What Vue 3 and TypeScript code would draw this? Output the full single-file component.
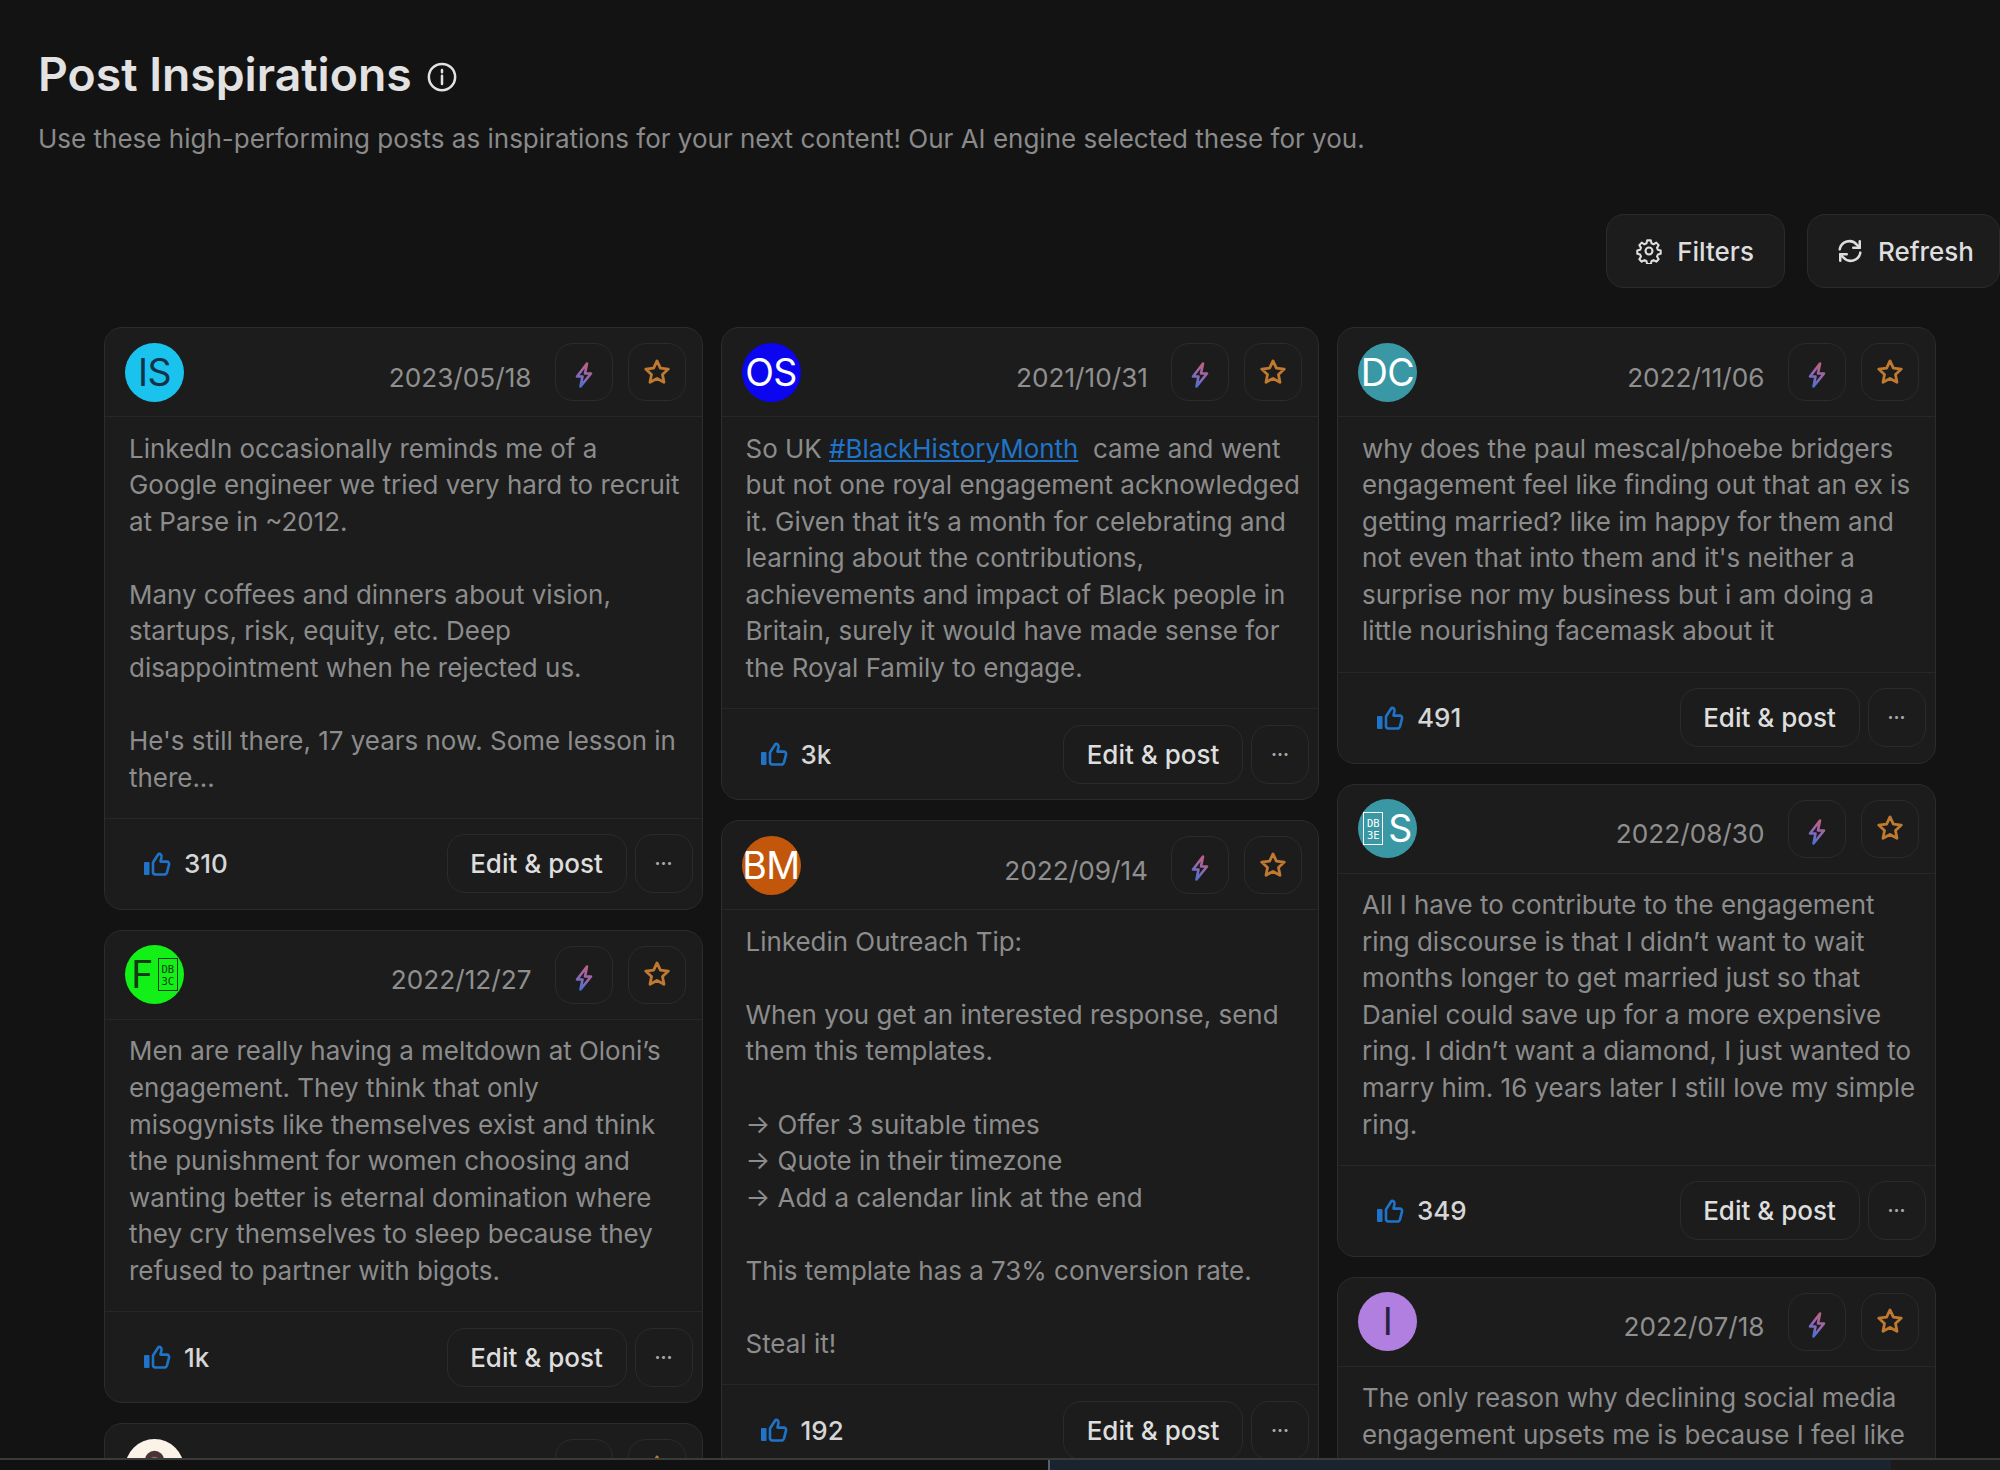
<script setup lang="ts">
interface Post {
  id: string
  initials: string
  avatar: string
  fg: string
  date: string
  body: string
  likes: string
  code?: string[]
  codeFirst?: boolean
  photo?: boolean
  tag?: string
  lead?: string
}

const col1: Post[] = [
  { id: 'a', initials: 'IS', avatar: '#19c3ee', fg: '#16324a', date: '2023/05/18', likes: '310',
    body: "LinkedIn occasionally reminds me of a Google engineer we tried very hard to recruit at Parse in ~2012.\n\nMany coffees and dinners about vision, startups, risk, equity, etc. Deep disappointment when he rejected us.\n\nHe's still there, 17 years now. Some lesson in there..." },
  { id: 'b', initials: 'F', avatar: '#12f018', fg: '#123a14', date: '2022/12/27', likes: '1k', code: ['DB', '3C'],
    body: 'Men are really having a meltdown at Oloni’s engagement. They think that only misogynists like themselves exist and think the punishment for women choosing and wanting better is eternal domination where they cry themselves to sleep because they refused to partner with bigots.' },
  { id: 'c', initials: '', avatar: '#fbf3e8', fg: '#000000', date: '', likes: '', photo: true, body: '' },
]
const col2: Post[] = [
  { id: 'd', initials: 'OS', avatar: '#0c06f0', fg: '#ffffff', date: '2021/10/31', likes: '3k', tag: '#BlackHistoryMonth',
    lead: 'So UK ',
    body: 'came and went but not one royal engagement acknowledged it. Given that it’s a month for celebrating and learning about the contributions, achievements and impact of Black people in Britain, surely it would have made sense for the Royal Family to engage.' },
  { id: 'e', initials: 'BM', avatar: '#c2570c', fg: '#ffffff', date: '2022/09/14', likes: '192',
    body: 'Linkedin Outreach Tip:\n\nWhen you get an interested response, send them this templates.\n\n→ Offer 3 suitable times\n→ Quote in their timezone\n→ Add a calendar link at the end\n\nThis template has a 73% conversion rate.\n\nSteal it!' },
]
const col3: Post[] = [
  { id: 'f', initials: 'DC', avatar: '#3a98a4', fg: '#ffffff', date: '2022/11/06', likes: '491',
    body: "why does the paul mescal/phoebe bridgers engagement feel like finding out that an ex is getting married? like im happy for them and not even that into them and it's neither a surprise nor my business but i am doing a little nourishing facemask about it" },
  { id: 'g', initials: 'S', avatar: '#3a98a4', fg: '#ffffff', date: '2022/08/30', likes: '349', code: ['DB', '3E'], codeFirst: true,
    body: 'All I have to contribute to the engagement ring discourse is that I didn’t want to wait months longer to get married just so that Daniel could save up for a more expensive ring. I didn’t want a diamond, I just wanted to marry him. 16 years later I still love my simple ring.' },
  { id: 'h', initials: 'I', avatar: '#b07fe0', fg: '#2a2140', date: '2022/07/18', likes: '',
    body: 'The only reason why declining social media engagement upsets me is because I feel like' },
]
const columns = [col1, col2, col3]
</script>

<template>
  <div class="screen">
    <main class="main">
      <header class="head">
        <h1 class="title">
          Post Inspirations
          <svg class="info" viewBox="0 0 24 24" fill="none" stroke="currentColor" stroke-width="2">
            <circle cx="12" cy="12" r="10.5" />
            <path d="M12 11v6.5M12 6.4v1.8" stroke-linecap="round" />
          </svg>
        </h1>
        <p class="sub">Use these high-performing posts as inspirations for your next content! Our AI engine selected these for you.</p>
      </header>

      <div class="tools">
        <button class="tool">
          <svg viewBox="0 0 24 24" fill="none" stroke="currentColor" stroke-width="1.9" stroke-linejoin="round">
            <circle cx="12" cy="12" r="3.2" />
            <path d="M10.3 2.2h3.4l.7 2.8 1.8.8 2.5-1.5 2.2 2.3-1.5 2.5.8 1.8 2.6.7v3l-2.6.7-.8 1.8 1.5 2.5-2.2 2.3-2.5-1.5-1.8.8-.7 2.8h-3.4l-.7-2.8-1.8-.8-2.5 1.5-2.2-2.3 1.5-2.5-.8-1.8-2.6-.7v-3l2.6-.7.8-1.8-1.5-2.5 2.2-2.3 2.5 1.5 1.8-.8z" />
          </svg>
          Filters
        </button>
        <button class="tool tool-last">
          <svg viewBox="0 0 24 24" fill="none" stroke="currentColor" stroke-width="2.3" stroke-linecap="round" stroke-linejoin="round">
            <path d="M2.5 10.5a9 9 0 0 1 15.8-4.3L21 9" />
            <path d="M21 3v6h-6" />
            <path d="M21.5 13.5a9 9 0 0 1-15.8 4.3L3 15" />
            <path d="M3 21v-6h6" />
          </svg>
          Refresh
        </button>
      </div>

      <div class="board">
        <div v-for="(col, i) in columns" :key="i" class="col">
          <article v-for="p in col" :key="p.id" class="card">
            <div class="card-head">
              <div class="avatar" :style="{ background: p.avatar, color: p.fg }">
                <svg v-if="p.photo" class="photo" viewBox="0 0 60 60">
                  <ellipse cx="30" cy="21" rx="9.5" ry="9" fill="#4a3236" />
                  <ellipse cx="30" cy="24" rx="6" ry="6" fill="#8a6a68" />
                  <path d="M14 60c0-18 7-28 16-28s16 10 16 28z" fill="#4a3236" />
                </svg>
                <span v-if="p.code && p.codeFirst" class="code"><span v-for="c in p.code" :key="c">{{ c }}</span></span>
                <span v-if="p.initials">{{ p.initials }}</span>
                <span v-if="p.code && !p.codeFirst" class="code"><span v-for="c in p.code" :key="c">{{ c }}</span></span>
              </div>
              <time v-if="p.date" class="date">{{ p.date }}</time>
              <button class="sq">
                <svg class="bolt" viewBox="0 0 20 28" fill="none" :stroke="`url(#bolt-${p.id})`" stroke-width="2.6" stroke-linejoin="round">
                  <defs>
                    <linearGradient :id="`bolt-${p.id}`" x1="0.7" y1="0" x2="0.3" y2="1">
                      <stop offset="0" stop-color="#c0607e" />
                      <stop offset="0.55" stop-color="#8f68b4" />
                      <stop offset="1" stop-color="#4a72d4" />
                    </linearGradient>
                  </defs>
                  <path d="M13 2.5 3 15.5h5.5L6.5 25.5 17 12.5h-6z" />
                </svg>
              </button>
              <button class="sq">
                <svg class="star" viewBox="0 0 24 24" fill="none" stroke="#c07a30" stroke-width="2.4" stroke-linejoin="round">
                  <path d="m12 2.5 2.9 6.2 6.8.8-5 4.6 1.3 6.7-6-3.3-6 3.3 1.3-6.7-5-4.6 6.8-.8z" />
                </svg>
              </button>
            </div>
            <p v-if="p.body" class="body"><template v-if="p.tag">{{ p.lead }}<a class="tag">{{ p.tag }}</a>&nbsp; </template>{{ p.body }}</p>
            <div v-if="p.likes" class="foot">
              <svg class="thumb" viewBox="0 0 28 26" fill="none" stroke="#1f74c9" stroke-width="2.6" stroke-linejoin="round">
                <rect x="1" y="11" width="5.5" height="13" rx="1" fill="#1f74c9" stroke="none" />
                <path d="M10 11.5 15.5 3c2-.6 3.3 1 3 3l-1 4.6h6.3c1.6 0 2.6 1.4 2.2 3l-2 7.7c-.4 1.4-1.4 2.2-2.8 2.2H13c-1.5 0-3-.5-3-2z" />
              </svg>
              <span class="likes">{{ p.likes }}</span>
              <button class="edit">Edit &amp; post</button>
              <button class="more">···</button>
            </div>
          </article>
        </div>
      </div>
    </main>
    <footer class="bar">
      <div class="bar-left"></div>
      <div class="bar-panel"></div>
      <div class="bar-right"></div>
    </footer>
  </div>
</template>

<style>
html, body { margin: 0; background: #131313; }
</style>

<style scoped>
.screen {
  width: 2000px;
  height: 1470px;
  display: flex;
  flex-direction: column;
  overflow: hidden;
  background: #131313;
  font-family: Inter, "Noto Sans", sans-serif;
}
.main { flex: 1; min-height: 0; overflow: hidden; }
.head { padding: 46px 0 0 38px; }
.title {
  margin: 0;
  display: flex;
  align-items: center;
  gap: 15px;
  font-size: 46.3px;
  line-height: 56px;
  font-weight: 600;
  color: #e2e2e2;
}
.info { width: 30px; height: 30px; margin-top: 5px; }
.sub { margin: 19px 0 0; font-size: 26px; line-height: 36px; color: #8a8a8a; }
.tools { display: flex; justify-content: flex-end; gap: 22px; margin-top: 57px; }
.tool {
  display: flex;
  align-items: center;
  gap: 15px;
  height: 74px;
  padding: 0 30px 0 29px;
  background: #1c1c1c;
  border: 1px solid #2b2b2b;
  border-radius: 18px;
  color: #dedede;
  font: 500 26px Inter, sans-serif;
}
.tool-last { padding: 0 25px 0 29px; }
.tool svg { width: 26px; height: 26px; }
.board { display: flex; gap: 18px; padding-left: 104px; margin-top: 39px; }
.col { width: 598.5px; flex: none; display: flex; flex-direction: column; gap: 20px; }
.card {
  background: #1c1c1c;
  border: 1px solid #2c2c2c;
  border-radius: 18px;
  box-sizing: border-box;
}
.card-head {
  display: flex;
  align-items: center;
  gap: 15px;
  height: 89px;
  box-sizing: border-box;
  padding: 0 16px 0 20px;
  border-bottom: 1px solid #272727;
}
.avatar {
  position: relative;
  width: 59px;
  height: 59px;
  border-radius: 50%;
  overflow: hidden;
  display: flex;
  align-items: center;
  justify-content: center;
  gap: 5px;
  font-size: 37.5px;
  font-weight: 400;
  letter-spacing: -0.5px;
  margin-right: auto;
  flex: none;
}
.photo { width: 59px; height: 59px; }
.code {
  display: flex;
  flex-direction: column;
  box-sizing: border-box;
  width: 20px;
  height: 33px;
  align-items: center;
  justify-content: center;
  font-family: "DejaVu Sans Mono", monospace;
  font-size: 10.5px;
  line-height: 12px;
  font-weight: 400;
  letter-spacing: 0;
  border: 1px solid currentColor;
}
.date { font-size: 26.2px; color: #8f8f8f; margin: 10px 8px 0 0; }
.sq {
  width: 58px;
  height: 58px;
  padding: 0;
  display: flex;
  align-items: center;
  justify-content: center;
  background: transparent;
  border: 1px solid #2b2b2b;
  border-radius: 18px;
  flex: none;
}
.bolt { width: 20px; height: 28px; margin-top: 6px; }
.star { width: 28px; height: 28px; margin-top: -1px; }
.body {
  margin: 0;
  padding: 13.5px 14.5px 21.5px 24px;
  font-size: 25.95px;
  line-height: 36.6px;
  color: #8c8c8c;
  white-space: pre-line;
}
.tag { color: #1f74c9; text-decoration: underline; }
.foot {
  display: flex;
  align-items: center;
  height: 91px;
  box-sizing: border-box;
  padding: 0 9px 0 38px;
  border-top: 1px solid #272727;
}
.thumb { width: 28px; height: 26px; }
.likes { margin-left: 13px; margin-right: auto; font-size: 26px; font-weight: 500; color: #d6d6d6; }
.edit {
  height: 59px;
  width: 180px;
  background: transparent;
  border: 1px solid #2b2b2b;
  border-radius: 18px;
  color: #dedede;
  font: 500 26px Inter, sans-serif;
  padding: 0;
}
.more {
  height: 59px;
  width: 58px;
  margin-left: 8px;
  background: transparent;
  border: 1px solid #2b2b2b;
  border-radius: 18px;
  color: #a8a8a8;
  font: 700 18px Inter, sans-serif;
  padding: 0;
}
.bar {
  height: 12px;
  flex: none;
  display: flex;
  box-sizing: border-box;
  border-top: 2px solid #3a3a3a;
}
.bar-left { width: 1048px; background: #111111; }
.bar-panel {
  width: 843px;
  box-sizing: border-box;
  border-left: 2px solid #56606a;
  background: #1a2430;
}
.bar-right { flex: 1; background: #1b1b1b; }
</style>
